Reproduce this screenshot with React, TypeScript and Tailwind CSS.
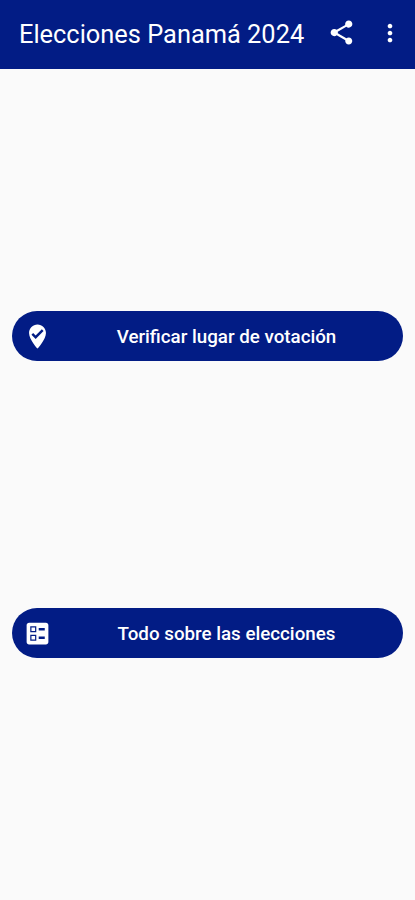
import type { ReactNode } from "react";
import {
  MdBallot,
  MdMoreVert,
  MdShare,
  MdWhereToVote,
} from "react-icons/md";

interface MenuButtonProps {
  icon: ReactNode;
  label: string;
}

function MenuButton({ icon, label }: MenuButtonProps) {
  return (
    <button className="flex h-[50px] w-full cursor-pointer items-center rounded-full bg-[#021c85] px-[11px] text-white">
      {icon}
      <span className="flex-1 pt-[3px] pl-[9px] text-center text-[18.75px] font-medium">
        {label}
      </span>
    </button>
  );
}

export default function App() {
  return (
    <div className="flex h-[900px] w-[415px] flex-col bg-[#fafafa] font-['Roboto',sans-serif]">
      {/* App bar */}
      <header className="flex h-[69px] items-center bg-[#021c85] pb-1 pl-[19px] text-white">
        <h1 className="flex-1 pt-[3px] text-[25.4px] whitespace-nowrap">
          Elecciones Panamá 2024
        </h1>
        <button className="mr-5 cursor-pointer" title="Compartir">
          <MdShare size={29} />
        </button>
        <button className="mr-[11px] cursor-pointer" title="Más opciones">
          <MdMoreVert size={28} />
        </button>
      </header>

      {/* Menu */}
      <main className="flex flex-col gap-[247px] px-3 pt-[242px]">
        <MenuButton
          icon={<MdWhereToVote size={29} />}
          label="Verificar lugar de votación"
        />
        <MenuButton
          icon={<MdBallot size={29} />}
          label="Todo sobre las elecciones"
        />
      </main>
    </div>
  );
}
